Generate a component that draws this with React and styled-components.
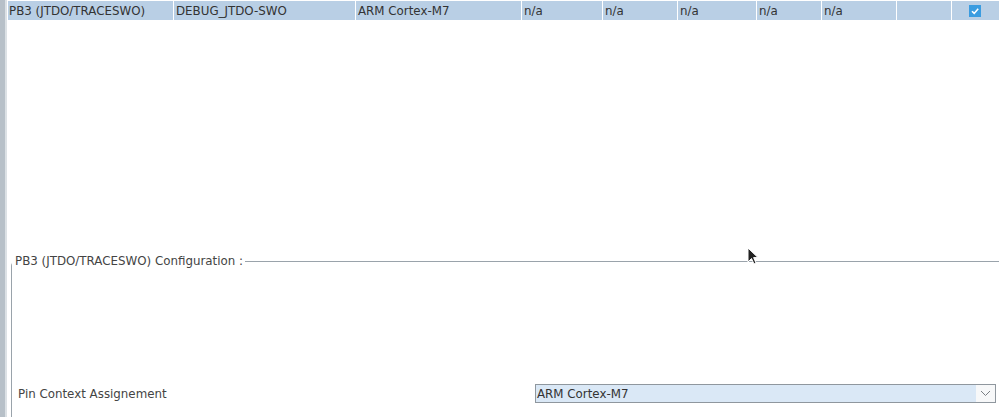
import React from "react";
import styled, { createGlobalStyle } from "styled-components";

const Global = createGlobalStyle`
  html, body { margin: 0; padding: 0; background: #fff; overflow: hidden; }
  body { font-family: "DejaVu Sans", sans-serif; font-size: 11.85px; color: #3a3a3a; }
`;

const Page = styled.div`
  position: relative;
  display: flex;
  width: 999px;
  height: 417px;
  overflow: hidden;
`;

const Strip = styled.div`
  width: 5px;
  flex: none;
  background: #b7c0c8;
  border-right: 2px solid #dce1e5;
`;

const Main = styled.div`
  flex: 1;
  display: flex;
  flex-direction: column;
  padding-left: 1px;
`;

const TableArea = styled.div`
  height: 253px;
  padding-top: 1px;
  flex: none;
`;

const Row = styled.div`
  display: grid;
  grid-template-columns: 165px 181px 165px 80px 74px 78px 64px 74px 54px 47px;
  column-gap: 1px;
  background: #fff;
  height: 19px;
`;

const Cell = styled.div`
  background: #b9cfe5;
  padding-left: ${(p) => p.$pad ?? 2}px;
  display: flex;
  align-items: center;
  justify-content: ${(p) => (p.$center ? "center" : "flex-start")};
  white-space: nowrap;
  overflow: hidden;
  color: #333;
`;

const Check = styled.div`
  width: 12px;
  height: 12px;
  background: #3a9ce0;
  display: flex;
  align-items: center;
  justify-content: center;
  margin-right: 2px;
`;

const Fieldset = styled.fieldset`
  margin: 0 0 0 3px;
  padding: 0;
  border: none;
  border-top: 1px solid #9aa3ab;
  border-left: 1px solid #9aa3ab;
  border-top-left-radius: 5px;
  flex: 1;
  display: flex;
  flex-direction: column;
  min-width: 0;
`;

const Legend = styled.legend`
  padding: 0 2px 0 3px;
  margin-left: 0;
  color: #444;
`;

const Body = styled.div`
  display: flex;
  flex-direction: column;
  justify-content: flex-end;
  flex: 1;
  padding-bottom: 14px;
`;

const FieldRow = styled.div`
  display: flex;
  align-items: center;
  height: 19px;
  padding-left: 6px;
`;

const Label = styled.div`
  width: 517px;
  flex: none;
  color: #444;
`;

const Combo = styled.div`
  width: 459px;
  height: 17px;
  border: 1px solid #8f979e;
  display: flex;
  align-items: stretch;
  background: #dae8f6;
`;

const ComboText = styled.div`
  flex: 1;
  padding-left: 1px;
  display: flex;
  align-items: center;
  color: #333;
`;

const ComboArrow = styled.div`
  width: 19px;
  background: #f7f8f9;
  display: flex;
  align-items: center;
  justify-content: center;
`;

const Cursor = styled.svg`
  position: absolute;
  left: 747px;
  top: 247px;
`;

const cols = [
  { t: "PB3 (JTDO/TRACESWO)", pad: 1 },
  { t: "DEBUG_JTDO-SWO", pad: 2 },
  { t: "ARM Cortex-M7", pad: 2 },
  { t: "n/a" },
  { t: "n/a" },
  { t: "n/a" },
  { t: "n/a" },
  { t: "n/a" },
  { t: "" },
];

export default function App() {
  return (
    <>
      <Global />
      <Page>
        <Strip />
        <Main>
          <TableArea>
            <Row>
              {cols.map((c, i) => (
                <Cell key={i} $pad={c.pad}>
                  {c.t}
                </Cell>
              ))}
              <Cell $center $pad={0}>
                <Check>
                  <svg width="10" height="10" viewBox="0 0 10 10">
                    <path d="M2 5.2 L4.2 7.4 L8.2 2.8" stroke="#fff" strokeWidth="1.6" fill="none" />
                  </svg>
                </Check>
              </Cell>
            </Row>
          </TableArea>
          <Fieldset>
            <Legend>PB3 (JTDO/TRACESWO) Configuration :</Legend>
            <Body>
              <FieldRow>
                <Label>Pin Context Assignement</Label>
                <Combo>
                  <ComboText>ARM Cortex-M7</ComboText>
                  <ComboArrow>
                    <svg width="11" height="7" viewBox="0 0 11 7">
                      <path d="M1 1 L5.5 5.5 L10 1" stroke="#7a7f84" strokeWidth="1" fill="none" />
                    </svg>
                  </ComboArrow>
                </Combo>
              </FieldRow>
            </Body>
          </Fieldset>
        </Main>
        <Cursor width="14" height="20" viewBox="0 0 14 20">
          <path d="M1 1 L1 15 L4.5 11.5 L7 17 L9 16 L6.6 10.6 L11 10.6 Z" fill="#222" stroke="#fff" strokeWidth="1" />
        </Cursor>
      </Page>
    </>
  );
}
